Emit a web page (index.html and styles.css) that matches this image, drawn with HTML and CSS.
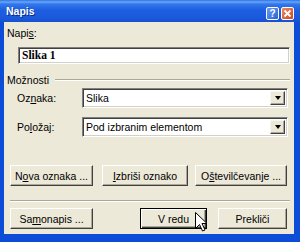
FILE: index.html
```html
<!DOCTYPE html>
<html lang="sl">

<head>
    <meta charset="UTF-8">
    <title>Napis</title>
    <link rel="stylesheet" href="styles.css">
</head>

<body>
    <div class="window">
        <!-- naslovna vrstica -->
        <div class="titlebar">
            <span class="title">Napis</span>
            <span class="tb-btn help">?</span>
            <span class="tb-btn close">
                <svg width="9" height="9" viewBox="0 0 9 9">
                    <path d="M1.5 1.5 L7.5 7.5 M7.5 1.5 L1.5 7.5" stroke="#fff" stroke-width="1.8" />
                </svg>
            </span>
        </div>

        <div class="client">
            <div class="label">Napi<u>s</u>:</div>
            <div class="textbox">Slika 1</div>

            <div class="group-head">
                <span>Možnosti</span>
                <span class="etch"></span>
            </div>

            <div class="field-row first">
                <label>Oz<u>n</u>aka:</label>
                <div class="combo">
                    <span class="value">Slika</span>
                    <span class="drop"><i></i></span>
                </div>
            </div>
            <div class="field-row second">
                <label>Po<u>l</u>ožaj:</label>
                <div class="combo">
                    <span class="value">Pod izbranim elementom</span>
                    <span class="drop"><i></i></span>
                </div>
            </div>

            <div class="btn-row row1">
                <button class="btn b-nova">N<u>o</u>va oznaka ...</button>
                <button class="btn b-izbrisi"><u>I</u>zbriši oznako</button>
                <button class="btn b-ostev">O<u>š</u>tevilčevanje ...</button>
            </div>

            <div class="etch sep"></div>

            <div class="btn-row row2">
                <button class="btn b-samo">Sa<u>m</u>onapis ...</button>
                <button class="btn default b-ok">V redu</button>
                <button class="btn b-cancel">Prekliči</button>
            </div>
        </div>

        <!-- kazalec miške -->
        <svg class="cursor" width="13" height="20" viewBox="0 0 13 20">
            <path d="M0.5 0.5 L0.5 16.5 L4.5 12.5 L7.5 19 L10 18 L7 11.5 L12 11.5 Z" fill="#fff" stroke="#000" stroke-width="1" />
        </svg>
    </div>
</body>

</html>
```

FILE: styles.css
```css
* {
    margin: 0;
    padding: 0;
}

body {
    background: #fff;
}

.window {
    position: relative;
    width: 300px;
    height: 242px;
    background: #0d4cd6;
    display: flex;
    flex-direction: column;
    font-family: "Liberation Sans", Arial, sans-serif;
    font-size: 10.5px;
    color: #000;
}

/* naslovna vrstica */
.titlebar {
    height: 22px;
    display: flex;
    align-items: center;
    padding: 0 6px;
    background: linear-gradient(to bottom, #2c72e8 0, #6aa6f6 2px, #3278ec 4px, #1d5fe0 10px, #1a58da 18px, #1850d0 22px);
}

.title {
    flex: 1;
    color: #fff;
    font-weight: bold;
    font-size: 10.5px;
    text-shadow: 1px 1px 0 #0a2a8a;
    margin-top: -1px;
}

.tb-btn {
    width: 13px;
    height: 13px;
    box-sizing: border-box;
    border: 1px solid #fff;
    border-radius: 2px;
    display: flex;
    align-items: center;
    justify-content: center;
    color: #fff;
    font-weight: bold;
    font-size: 10px;
    margin-top: 4px;
}

.help {
    background: linear-gradient(to bottom right, #6a9cf0, #2a62d8);
    margin-right: 2px;
}

.close {
    background: linear-gradient(to bottom right, #ec8a66, #d0461f);
}

/* vsebina okna */
.client {
    flex: 1;
    margin: 0 6px 8px 4px;
    background: #ece9d8;
    display: flex;
    flex-direction: column;
}

.label {
    line-height: 12px;
    margin: 5px 0 0 3px;
}

.textbox {
    height: 17px;
    box-sizing: border-box;
    margin: 8px 4px 0 14px;
    background: #fff;
    border: 1px solid;
    border-color: #808080 #fff #fff #808080;
    box-shadow: inset 1px 1px #404040, inset -1px -1px #d4d0c8;
    font-family: "Liberation Serif", "Times New Roman", serif;
    font-weight: bold;
    font-size: 11.5px;
    line-height: 15px;
    padding-left: 3px;
}

.group-head {
    display: flex;
    align-items: center;
    line-height: 12px;
    margin: 10px 4px 0 3px;
}

.group-head .etch {
    flex: 1;
    margin-left: 6px;
}

.etch {
    height: 0;
    border-top: 1px solid #aca899;
    border-bottom: 1px solid #fff;
}

.field-row {
    display: flex;
    align-items: center;
    padding-left: 13px;
}

.field-row.first {
    margin-top: 2px;
}

.field-row.second {
    margin-top: 9px;
}

.field-row label {
    width: 65px;
}

.combo {
    width: 206px;
    height: 20px;
    box-sizing: border-box;
    display: flex;
    align-items: stretch;
    padding: 2px;
    background: #fff;
    border: 1px solid;
    border-color: #808080 #fff #fff #808080;
    box-shadow: inset 1px 1px #404040, inset -1px -1px #d4d0c8;
}

.combo .value {
    flex: 1;
    line-height: 14px;
    padding-left: 1px;
}

.drop {
    width: 15px;
    box-sizing: border-box;
    background: #ece9d8;
    border: 1px solid;
    border-color: #f6f5ef #404040 #404040 #f6f5ef;
    box-shadow: inset -1px -1px #aca899;
    display: flex;
    align-items: center;
    justify-content: center;
}

.drop i {
    width: 0;
    height: 0;
    border-left: 3.5px solid transparent;
    border-right: 3.5px solid transparent;
    border-top: 4px solid #000;
}

/* gumbi */
.btn-row {
    display: flex;
    padding-left: 6px;
}

.row1 {
    margin-top: 28px;
}

.row2 {
    margin-top: 6px;
}

.sep {
    margin: 14px 4px 0 6px;
}

.btn {
    height: 21px;
    box-sizing: border-box;
    background: #ece9d8;
    border: 1px solid;
    border-color: #fff #404040 #404040 #fff;
    box-shadow: inset -1px -1px #aca899;
    font: inherit;
    color: #000;
    display: flex;
    align-items: center;
    justify-content: center;
}

.btn.default {
    border: 1px solid #000;
    box-shadow: inset 1px 1px #fff, inset -1px -1px #404040, inset -2px -2px #aca899;
}

.b-nova {
    width: 83px;
}

.b-izbrisi {
    width: 86px;
    margin-left: 9px;
}

.b-ostev {
    width: 92px;
    margin-left: 7px;
}

.b-samo {
    width: 83px;
}

.b-ok {
    width: 67px;
    margin-left: 47px;
}

.b-cancel {
    width: 69px;
    margin-left: 11px;
}

.cursor {
    position: absolute;
    left: 195px;
    top: 212px;
}
```
